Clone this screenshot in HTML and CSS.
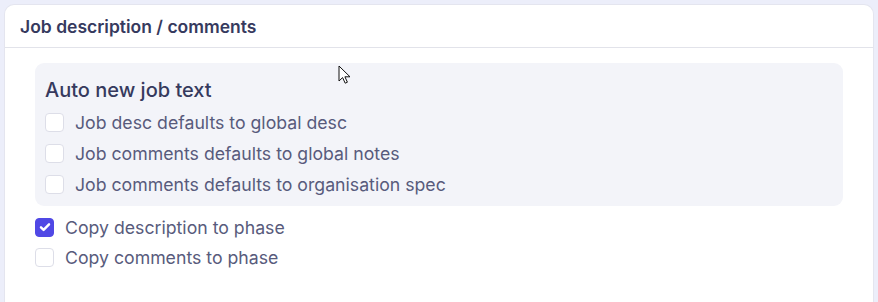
FILE: index.html
```html
<!DOCTYPE html>
<html lang="en">
<head>
  <meta charset="UTF-8">
  <title>Job description / comments</title>
  <link rel="stylesheet" href="styles.css">
</head>
<body>
  <div class="card">
    <div class="card-header">
      <h3>Job description / comments</h3>
    </div>

    <div class="card-body">
      <div class="group-box">
        <h4>Auto new job text</h4>
        <label class="check-row"><span class="box"></span>Job desc defaults to global desc</label>
        <label class="check-row"><span class="box"></span>Job comments defaults to global notes</label>
        <label class="check-row"><span class="box"></span>Job comments defaults to organisation spec</label>
      </div>

      <div class="outer-rows">
        <label class="check-row">
          <span class="box checked">
            <svg viewBox="0 0 16 16" width="14" height="14"><path d="M3.4 8.4l3 3 6.2-6.4" fill="none" stroke="#fff" stroke-width="2.8" stroke-linecap="round" stroke-linejoin="round"/></svg>
          </span>Copy description to phase
        </label>
        <label class="check-row"><span class="box"></span>Copy comments to phase</label>
      </div>
    </div>
  </div>

  <svg class="cursor" width="14" height="20" viewBox="0 0 14 20">
    <path d="M1 1v15l3.6-3.4 2.6 5.6 2.2-1-2.5-5.4H12z" fill="#fff" stroke="#111" stroke-width="1" stroke-linejoin="round"/>
  </svg>
</body>
</html>
```

FILE: styles.css
```css
:root {
  --page-bg: #eceefa;
  --title-color: #363a5e;
  --text-color: #585b7c;
  --box-bg: #f3f4f9;
  --line-color: #e2e3ea;
  --accent: #5048e5;
}

body {
  margin: 0;
  padding: 5px 5px 0 5px;
  background-color: var(--page-bg);
  font-family: 'Inter', 'Noto Sans', sans-serif;
  height: 297px;
  overflow: hidden;
  position: relative;
}

.card {
  background-color: white;
  border-radius: 9px 9px 0 0;
  box-shadow: 0 0 0 1px #e4e5ef;
  height: 300px;
}

.card-header {
  height: 42px;
  display: flex;
  align-items: center;
  padding: 0 15px;
  border-bottom: 1px solid var(--line-color);
}

h3 {
  margin: 0;
  font-size: 17.5px;
  font-weight: 600;
  color: var(--title-color);
}

.card-body {
  padding: 15px 30px 0 30px;
}

.group-box {
  background-color: var(--box-bg);
  border-radius: 9px;
  padding: 13px 10px 6px 10px;
}

h4 {
  margin: 0 0 3px 0;
  font-size: 20px;
  line-height: 28px;
  font-weight: 500;
  color: var(--title-color);
}

.check-row {
  display: flex;
  align-items: center;
  gap: 11px;
  height: 31px;
  font-size: 17.7px;
  color: var(--text-color);
  cursor: pointer;
}

.outer-rows {
  padding-top: 6px;
}

.outer-rows .check-row {
  height: 30px;
}

.box {
  width: 17px;
  height: 17px;
  flex: none;
  background-color: white;
  border: 1px solid #dddee8;
  border-radius: 4px;
  display: flex;
  align-items: center;
  justify-content: center;
}

.box.checked {
  background-color: var(--accent);
  border-color: var(--accent);
}

.cursor {
  position: absolute;
  left: 338px;
  top: 65px;
}
```
